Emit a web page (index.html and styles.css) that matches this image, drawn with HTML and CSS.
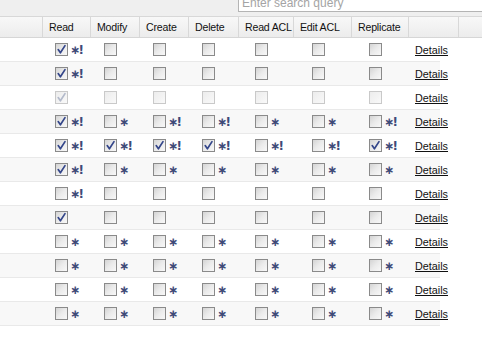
FILE: index.html
```html
<!DOCTYPE html>
<html>
<head>
<meta charset="utf-8">
<link rel="stylesheet" href="styles.css">
</head>
<body>
<svg class="defs" width="0" height="0">
  <symbol id="chk" viewBox="0 0 11 11"><path d="M2.2 5.6 L4.4 8.8 L9 1.6" fill="none" stroke-width="1.7" stroke-linecap="round" stroke-linejoin="round"/></symbol>
</svg>
<div class="page">
  <div class="toolbar">
    <div class="search"><span class="ph">Enter search query</span></div>
  </div>
  <div class="head">
    <div class="h"></div>
    <div class="h">Read</div>
    <div class="h">Modify</div>
    <div class="h">Create</div>
    <div class="h">Delete</div>
    <div class="h">Read ACL</div>
    <div class="h">Edit ACL</div>
    <div class="h">Replicate</div>
    <div class="h"></div>
    <div class="h"></div>
  </div>
  <div class="body">
    <!-- row 1 -->
    <div class="row">
      <div class="c"></div>
      <div class="c p1"><span class="cb on"><svg><use href="#chk"/></svg></span><span class="mk">∗!</span></div>
      <div class="c p2"><span class="cb"></span></div>
      <div class="c p3"><span class="cb"></span></div>
      <div class="c p4"><span class="cb"></span></div>
      <div class="c p5"><span class="cb"></span></div>
      <div class="c p6"><span class="cb"></span></div>
      <div class="c p7"><span class="cb"></span></div>
      <div class="c p8"><a class="lnk">Details</a></div>
    </div>
    <!-- row 2 -->
    <div class="row">
      <div class="c"></div>
      <div class="c p1"><span class="cb on"><svg><use href="#chk"/></svg></span><span class="mk">∗!</span></div>
      <div class="c p2"><span class="cb"></span></div>
      <div class="c p3"><span class="cb"></span></div>
      <div class="c p4"><span class="cb"></span></div>
      <div class="c p5"><span class="cb"></span></div>
      <div class="c p6"><span class="cb"></span></div>
      <div class="c p7"><span class="cb"></span></div>
      <div class="c p8"><a class="lnk">Details</a></div>
    </div>
    <!-- row 3 -->
    <div class="row">
      <div class="c"></div>
      <div class="c p1"><span class="cb dis on"><svg><use href="#chk"/></svg></span></div>
      <div class="c p2"><span class="cb dis"></span></div>
      <div class="c p3"><span class="cb dis"></span></div>
      <div class="c p4"><span class="cb dis"></span></div>
      <div class="c p5"><span class="cb dis"></span></div>
      <div class="c p6"><span class="cb dis"></span></div>
      <div class="c p7"><span class="cb dis"></span></div>
      <div class="c p8"><a class="lnk">Details</a></div>
    </div>
    <!-- row 4 -->
    <div class="row">
      <div class="c"></div>
      <div class="c p1"><span class="cb on"><svg><use href="#chk"/></svg></span><span class="mk">∗!</span></div>
      <div class="c p2"><span class="cb"></span><span class="mk">∗</span></div>
      <div class="c p3"><span class="cb"></span><span class="mk">∗!</span></div>
      <div class="c p4"><span class="cb"></span><span class="mk">∗!</span></div>
      <div class="c p5"><span class="cb"></span><span class="mk">∗</span></div>
      <div class="c p6"><span class="cb"></span><span class="mk">∗</span></div>
      <div class="c p7"><span class="cb"></span><span class="mk">∗!</span></div>
      <div class="c p8"><a class="lnk">Details</a></div>
    </div>
    <!-- row 5 -->
    <div class="row">
      <div class="c"></div>
      <div class="c p1"><span class="cb on"><svg><use href="#chk"/></svg></span><span class="mk">∗!</span></div>
      <div class="c p2"><span class="cb on"><svg><use href="#chk"/></svg></span><span class="mk">∗!</span></div>
      <div class="c p3"><span class="cb on"><svg><use href="#chk"/></svg></span><span class="mk">∗!</span></div>
      <div class="c p4"><span class="cb on"><svg><use href="#chk"/></svg></span><span class="mk">∗!</span></div>
      <div class="c p5"><span class="cb"></span><span class="mk">∗!</span></div>
      <div class="c p6"><span class="cb"></span><span class="mk">∗!</span></div>
      <div class="c p7"><span class="cb on"><svg><use href="#chk"/></svg></span><span class="mk">∗!</span></div>
      <div class="c p8"><a class="lnk">Details</a></div>
    </div>
    <!-- row 6 -->
    <div class="row">
      <div class="c"></div>
      <div class="c p1"><span class="cb on"><svg><use href="#chk"/></svg></span><span class="mk">∗!</span></div>
      <div class="c p2"><span class="cb"></span><span class="mk">∗</span></div>
      <div class="c p3"><span class="cb"></span><span class="mk">∗</span></div>
      <div class="c p4"><span class="cb"></span><span class="mk">∗</span></div>
      <div class="c p5"><span class="cb"></span><span class="mk">∗</span></div>
      <div class="c p6"><span class="cb"></span><span class="mk">∗</span></div>
      <div class="c p7"><span class="cb"></span><span class="mk">∗</span></div>
      <div class="c p8"><a class="lnk">Details</a></div>
    </div>
    <!-- row 7 -->
    <div class="row">
      <div class="c"></div>
      <div class="c p1"><span class="cb"></span><span class="mk">∗!</span></div>
      <div class="c p2"><span class="cb"></span></div>
      <div class="c p3"><span class="cb"></span></div>
      <div class="c p4"><span class="cb"></span></div>
      <div class="c p5"><span class="cb"></span></div>
      <div class="c p6"><span class="cb"></span></div>
      <div class="c p7"><span class="cb"></span></div>
      <div class="c p8"><a class="lnk">Details</a></div>
    </div>
    <!-- row 8 -->
    <div class="row">
      <div class="c"></div>
      <div class="c p1"><span class="cb on"><svg><use href="#chk"/></svg></span></div>
      <div class="c p2"><span class="cb"></span></div>
      <div class="c p3"><span class="cb"></span></div>
      <div class="c p4"><span class="cb"></span></div>
      <div class="c p5"><span class="cb"></span></div>
      <div class="c p6"><span class="cb"></span></div>
      <div class="c p7"><span class="cb"></span></div>
      <div class="c p8"><a class="lnk">Details</a></div>
    </div>
    <!-- row 9 -->
    <div class="row">
      <div class="c"></div>
      <div class="c p1"><span class="cb"></span><span class="mk">∗</span></div>
      <div class="c p2"><span class="cb"></span><span class="mk">∗</span></div>
      <div class="c p3"><span class="cb"></span><span class="mk">∗</span></div>
      <div class="c p4"><span class="cb"></span><span class="mk">∗</span></div>
      <div class="c p5"><span class="cb"></span><span class="mk">∗</span></div>
      <div class="c p6"><span class="cb"></span><span class="mk">∗</span></div>
      <div class="c p7"><span class="cb"></span><span class="mk">∗</span></div>
      <div class="c p8"><a class="lnk">Details</a></div>
    </div>
    <!-- row 10 -->
    <div class="row">
      <div class="c"></div>
      <div class="c p1"><span class="cb"></span><span class="mk">∗</span></div>
      <div class="c p2"><span class="cb"></span><span class="mk">∗</span></div>
      <div class="c p3"><span class="cb"></span><span class="mk">∗</span></div>
      <div class="c p4"><span class="cb"></span><span class="mk">∗</span></div>
      <div class="c p5"><span class="cb"></span><span class="mk">∗</span></div>
      <div class="c p6"><span class="cb"></span><span class="mk">∗</span></div>
      <div class="c p7"><span class="cb"></span><span class="mk">∗</span></div>
      <div class="c p8"><a class="lnk">Details</a></div>
    </div>
    <!-- row 11 -->
    <div class="row">
      <div class="c"></div>
      <div class="c p1"><span class="cb"></span><span class="mk">∗</span></div>
      <div class="c p2"><span class="cb"></span><span class="mk">∗</span></div>
      <div class="c p3"><span class="cb"></span><span class="mk">∗</span></div>
      <div class="c p4"><span class="cb"></span><span class="mk">∗</span></div>
      <div class="c p5"><span class="cb"></span><span class="mk">∗</span></div>
      <div class="c p6"><span class="cb"></span><span class="mk">∗</span></div>
      <div class="c p7"><span class="cb"></span><span class="mk">∗</span></div>
      <div class="c p8"><a class="lnk">Details</a></div>
    </div>
    <!-- row 12 -->
    <div class="row">
      <div class="c"></div>
      <div class="c p1"><span class="cb"></span><span class="mk">∗</span></div>
      <div class="c p2"><span class="cb"></span><span class="mk">∗</span></div>
      <div class="c p3"><span class="cb"></span><span class="mk">∗</span></div>
      <div class="c p4"><span class="cb"></span><span class="mk">∗</span></div>
      <div class="c p5"><span class="cb"></span><span class="mk">∗</span></div>
      <div class="c p6"><span class="cb"></span><span class="mk">∗</span></div>
      <div class="c p7"><span class="cb"></span><span class="mk">∗</span></div>
      <div class="c p8"><a class="lnk">Details</a></div>
    </div>
  </div>
</div>
</body>
</html>
```

FILE: styles.css
```css
html, body {
  margin: 0;
  padding: 0;
  background: #ffffff;
  overflow: hidden;
}
.defs {
  display: block;
  width: 0;
  height: 0;
  overflow: hidden;
}
.page {
  width: 482px;
  font-family: "Liberation Sans", Arial, sans-serif;
  font-size: 11px;
  color: #111;
}
.toolbar {
  height: 16px;
  background: #efefef;
  display: flex;
  justify-content: flex-end;
  overflow: hidden;
}
.search {
  width: 244px;
  height: 22px;
  margin-top: -10px;
  box-sizing: border-box;
  border: 1px solid #b4b4b4;
  border-right: none;
  background: #fff;
  padding: 0 0 0 3px;
  display: flex;
  align-items: flex-end;
}
.ph {
  font-size: 12px;
  color: #a4a4a4;
  line-height: 14px;
  margin-bottom: 1px;
}
.head {
  display: grid;
  grid-template-columns: 42px 48px 49px 49px 50px 55px 58px 57px 50px 1fr;
  height: 22px;
  box-sizing: border-box;
  border-top: 1px solid #d8d8d8;
  border-bottom: 1px solid #d6d6d6;
  background: linear-gradient(#f8f8f8, #ececec);
}
.h {
  border-left: 1px solid #d8d8d8;
  padding-left: 6px;
  line-height: 20px;
  font-size: 10.6px;
  letter-spacing: -0.2px;
  white-space: nowrap;
  overflow: hidden;
  color: #111;
}
.h:first-child {
  border-left: none;
}
.body {
  width: 440px;
}
.row {
  display: grid;
  grid-template-columns: 42px 48px 49px 49px 50px 55px 58px 57px 32px;
  height: 24px;
  box-sizing: border-box;
  border-bottom: 1px solid #e9e9e9;
  background: #ffffff;
}
.row:nth-child(even) {
  background: #f8f8f8;
}
.c {
  display: flex;
  align-items: center;
  white-space: nowrap;
}
.p1 { padding-left: 13px; }
.p2 { padding-left: 14px; }
.p3 { padding-left: 14px; }
.p4 { padding-left: 14px; }
.p5 { padding-left: 17px; }
.p6 { padding-left: 19px; }
.p7 { padding-left: 18px; }
.p8 { padding-left: 7px; overflow: visible; }
.cb {
  display: inline-flex;
  align-items: center;
  justify-content: center;
  width: 13px;
  height: 13px;
  box-sizing: border-box;
  border: 1px solid #8a8a8a;
  background: linear-gradient(135deg, #d4d4d4 0%, #ebebeb 50%, #f8f8f8 100%);
  flex: none;
}
.cb svg {
  width: 11px;
  height: 11px;
  stroke: #34468a;
}
.cb.dis {
  border-color: #c9c9c9;
  background: linear-gradient(135deg, #ececec, #f9f9f9);
}
.cb.dis svg {
  stroke: #b3bacb;
}
.mk {
  font-family: "DejaVu Sans", sans-serif;
  font-weight: bold;
  font-size: 12px;
  color: #3e4a78;
  margin-left: 2px;
  letter-spacing: -1.5px;
}
.lnk {
  color: #111;
  text-decoration: underline;
  font-size: 10.8px;
}
```
